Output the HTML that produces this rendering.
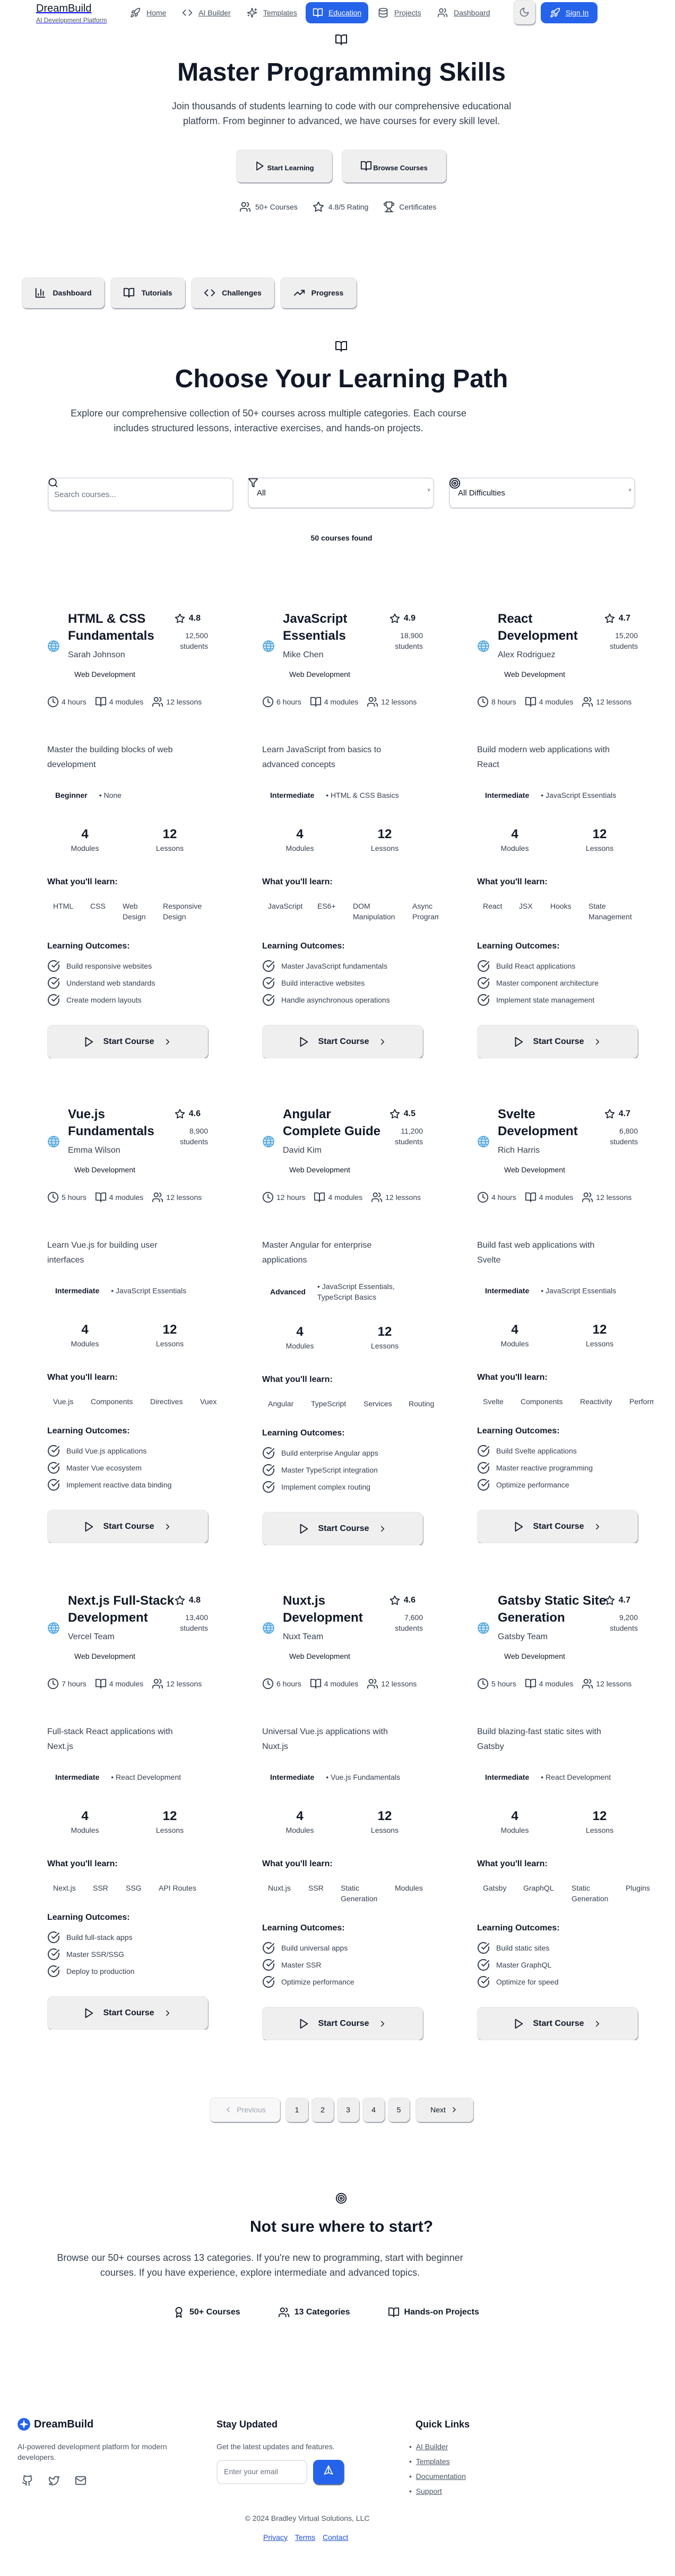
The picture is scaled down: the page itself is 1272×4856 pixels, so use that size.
<!DOCTYPE html>
<html><head><meta charset="utf-8">
<style>
*{box-sizing:border-box}
body{margin:0;width:1272px;height:4856px;position:relative;font-family:"Liberation Sans",Arial,sans-serif;color:#111827;background:#fff;overflow:hidden}
.a{position:absolute}
svg.i{fill:none;stroke:currentColor;stroke-width:2;stroke-linecap:round;stroke-linejoin:round}
.nl{position:absolute;top:14px;display:flex;align-items:center;gap:11px;font-size:14px;color:#4b5563;text-decoration:underline}
.nl svg{width:20px;height:20px}
.gbtn{position:absolute;background:#efefef;border:1px solid #e5e7eb;border-radius:9px;box-shadow:1px 2px 1px #a3a7ae;display:flex;align-items:center;justify-content:center;font-weight:bold;color:#111827}
.ctr{position:absolute;left:0;width:1287px;text-align:center}
.inp{position:absolute;border:2px solid #dfe1e6;border-radius:9px;box-shadow:0 1px 1px #c4c7cd}
.card{position:absolute;width:333px;overflow:hidden}
.hd{position:relative;padding-left:39px;width:303px}
.gl{position:absolute;left:0;top:55px;width:24px;height:24px}
.tt{font-size:24px;font-weight:bold;line-height:32px;width:205px;white-space:normal}
.au{margin-top:8px;font-size:16px;line-height:24px;color:#374151}
.bd{margin-top:10px;font-size:14px;line-height:20px;padding:4px 12px;width:max-content}
.rt{position:absolute;right:14px;top:5px;display:flex;align-items:center;gap:7px;font-size:16px;font-weight:bold;line-height:20px}
.rt svg{width:20px;height:20px}
.st{position:absolute;right:0;top:37px;text-align:right;font-size:14px;line-height:20px;color:#374151}
.meta{margin-top:27px;display:flex;gap:16px;font-size:14px;line-height:20px;color:#374151}
.meta>span{display:flex;align-items:center;gap:5px}
.meta svg{width:22px;height:22px}
.ds{margin-top:66px;font-size:16px;line-height:28px;color:#374151;width:303px;white-space:nowrap}
.df{margin-top:21px;display:flex;align-items:center;padding:4px 0;min-height:44px;font-size:14px;line-height:20px}
.lv{font-weight:bold;padding:0 12px;margin-left:3px;flex:none}
.pr{margin-left:10px;max-width:170px;color:#374151}
.sts{margin-top:36px;display:flex;gap:18px;width:302px}
.sts>div{width:142px;text-align:center}
.sts b{display:block;font-size:24px;line-height:32px}
.sts span{display:block;font-size:14px;line-height:20px;color:#374151}
.h4{margin-top:42px;font-size:16px;font-weight:bold;line-height:24px}
.sk{margin-top:23px;position:relative;height:20px;font-size:14px;line-height:20px;color:#374151;width:333px}
.sk.two{height:40px}
.sk span{position:absolute;top:0;white-space:nowrap}
.lo{margin-top:34px}
.oc{margin-top:13px;font-size:14px;line-height:24px;color:#374151}
.oc div{display:flex;gap:12px;align-items:center;margin-bottom:8px}
.oc div:last-child{margin-bottom:0}
.oc svg{width:24px;height:24px;flex:none}
.btn{margin-top:35px;width:303px;height:63px;background:#efefef;border:1px solid #e5e7eb;border-radius:10px;box-shadow:1px 2px 1px #a3a7ae;display:flex;align-items:center;justify-content:center;gap:16px;font-size:16px;font-weight:bold}
.btn svg{width:22px;height:22px}
.pg{position:absolute;top:3954px;height:46px;background:#efefef;border:1px solid #e5e7eb;border-radius:9px;box-shadow:1px 2px 1px #a3a7ae;display:flex;align-items:center;justify-content:center;font-size:14px;gap:8px}
</style></head><body>

<!-- NAV -->
<div class="a" style="left:68px;top:4px;font-size:20px;line-height:24px;text-decoration:underline;text-decoration-color:#0000ee">DreamBuild</div>
<div class="a" style="left:68px;top:31px;font-size:12px;line-height:14px;color:#4b5563;text-decoration:underline;text-decoration-color:#0000ee">AI Development Platform</div>

<div class="nl" style="left:245px"><svg class="i" viewBox="0 0 24 24"><path d="M4.5 16.5c-1.5 1.26-2 5-2 5s3.74-.5 5-2c.71-.84.7-2.13-.09-2.91a2.18 2.18 0 0 0-2.910-.09z"/><path d="m12 15-3-3a22 22 0 0 1 2-3.95A12.88 12.88 0 0 1 22 2c0 2.72-.78 7.5-6 11a22.35 22.35 0 0 1-4 2z"/><path d="M9 12H4s.55-3.03 2-4c1.62-1.08 5 0 5 0"/><path d="M12 15v5s3.03-.55 4-2c1.08-1.62 0-5 0-5"/></svg>Home</div>
<div class="nl" style="left:343px"><svg class="i" viewBox="0 0 24 24"><path d="m16 18 6-6-6-6"/><path d="m8 6-6 6 6 6"/></svg>AI Builder</div>
<div class="nl" style="left:465px"><svg class="i" viewBox="0 0 24 24"><path d="M9.937 15.5A2 2 0 0 0 8.5 14.063l-6.135-1.582a.5.5 0 0 1 0-.962L8.5 9.936A2 2 0 0 0 9.937 8.5l1.582-6.135a.5.5 0 0 1 .963 0L14.063 8.5A2 2 0 0 0 15.5 9.937l6.135 1.581a.5.5 0 0 1 0 .964L15.5 14.063a2 2 0 0 0-1.437 1.437l-1.582 6.135a.5.5 0 0 1-.963 0z"/><path d="M20 3v4M22 5h-4M4 17v2M5 18H3"/></svg>Templates</div>
<div class="a" style="left:576px;top:4px;width:118px;height:40px;background:#2563eb;border-radius:10px;display:flex;align-items:center;justify-content:center;gap:10px;color:#fff;font-size:14px;text-decoration:underline"><svg class="i" viewBox="0 0 24 24" style="width:20px;height:20px"><path d="M2 3h6a4 4 0 0 1 4 4v14a3 3 0 0 0-3-3H2z"/><path d="M22 3h-6a4 4 0 0 0-4 4v14a3 3 0 0 1 3-3h7z"/></svg>Education</div>
<div class="nl" style="left:712px"><svg class="i" viewBox="0 0 24 24"><ellipse cx="12" cy="5" rx="9" ry="3"/><path d="M3 5V19A9 3 0 0 0 21 19V5"/><path d="M3 12A9 3 0 0 0 21 12"/></svg>Projects</div>
<div class="nl" style="left:824px"><svg class="i" viewBox="0 0 24 24"><path d="M16 21v-2a4 4 0 0 0-4-4H6a4 4 0 0 0-4 4v2"/><circle cx="9" cy="7" r="4"/><path d="M22 21v-2a4 4 0 0 0-3-3.87"/><path d="M16 3.13a4 4 0 0 1 0 7.75"/></svg>Dashboard</div>
<div class="gbtn" style="left:967px;top:0;width:42px;height:46px;color:#6b7280"><svg class="i" viewBox="0 0 24 24" style="width:20px;height:20px"><path d="M12 3a6 6 0 0 0 9 9 9 9 0 1 1-9-9Z"/></svg></div>
<div class="a" style="left:1019px;top:4px;width:107px;height:40px;background:#2563eb;border-radius:10px;display:flex;align-items:center;justify-content:center;gap:10px;color:#fff;font-size:14px;text-decoration:underline"><svg class="i" viewBox="0 0 24 24" style="width:20px;height:20px"><path d="M4.5 16.5c-1.5 1.26-2 5-2 5s3.74-.5 5-2c.71-.84.7-2.13-.09-2.91a2.18 2.18 0 0 0-2.91-.09z"/><path d="m12 15-3-3a22 22 0 0 1 2-3.95A12.88 12.88 0 0 1 22 2c0 2.72-.78 7.5-6 11a22.35 22.35 0 0 1-4 2z"/><path d="M9 12H4s.55-3.03 2-4c1.62-1.08 5 0 5 0"/><path d="M12 15v5s3.03-.55 4-2c1.08-1.62 0-5 0-5"/></svg>Sign In</div>

<!-- HERO -->
<svg class="i a" viewBox="0 0 24 24" style="left:631px;top:63px;width:24px;height:24px"><path d="M2 3h6a4 4 0 0 1 4 4v14a3 3 0 0 0-3-3H2z"/><path d="M22 3h-6a4 4 0 0 0-4 4v14a3 3 0 0 1 3-3h7z"/></svg>
<div class="ctr" style="top:109px;font-size:48px;font-weight:bold;line-height:56px">Master Programming Skills</div>
<div class="ctr" style="top:186px;font-size:18px;line-height:28px;color:#374151">Join thousands of students learning to code with our comprehensive educational<br>platform. From beginner to advanced, we have courses for every skill level.</div>

<div class="gbtn" style="left:445px;top:282px;width:181px;height:62px;font-size:13px"><span style="display:flex;align-items:flex-end;gap:4px"><svg class="i" viewBox="0 0 24 24" style="width:20px;height:22px"><polygon points="6 3 20 12 6 21 6 3"/></svg><span>Start Learning</span></span></div>
<div class="gbtn" style="left:644px;top:282px;width:197px;height:62px;font-size:13px"><span style="display:flex;align-items:flex-end;gap:2px"><svg class="i" viewBox="0 0 24 24" style="width:22px;height:22px"><path d="M2 3h6a4 4 0 0 1 4 4v14a3 3 0 0 0-3-3H2z"/><path d="M22 3h-6a4 4 0 0 0-4 4v14a3 3 0 0 1 3-3h7z"/></svg><span>Browse Courses</span></span></div>

<div class="a" style="left:451px;top:378px;display:flex;align-items:center;gap:8px;font-size:14px;color:#374151;line-height:24px">
<svg class="i" viewBox="0 0 24 24" style="width:22px;height:22px"><path d="M16 21v-2a4 4 0 0 0-4-4H6a4 4 0 0 0-4 4v2"/><circle cx="9" cy="7" r="4"/><path d="M22 21v-2a4 4 0 0 0-3-3.87"/><path d="M16 3.13a4 4 0 0 1 0 7.75"/></svg><span>50+ Courses</span>
<svg class="i" viewBox="0 0 24 24" style="width:22px;height:22px;margin-left:20px"><polygon points="12 2 15.09 8.26 22 9.27 17 14.14 18.18 21.02 12 17.77 5.82 21.02 7 14.14 2 9.27 8.91 8.26 12 2"/></svg><span>4.8/5 Rating</span>
<svg class="i" viewBox="0 0 24 24" style="width:22px;height:22px;margin-left:20px"><path d="M6 9H4.5a2.5 2.5 0 0 1 0-5H6"/><path d="M18 9h1.5a2.5 2.5 0 0 0 0-5H18"/><path d="M4 22h16"/><path d="M10 14.66V17c0 .55-.47.98-.97 1.21C7.85 18.75 7 20.24 7 22"/><path d="M14 14.66V17c0 .55.47.98.97 1.21C16.15 18.75 17 20.240 17 22"/><path d="M18 2H6v7a6 6 0 0 0 12 0V2Z"/></svg><span>Certificates</span>
</div>

<!-- TABS -->
<div class="gbtn" style="left:41px;top:523px;width:156px;height:58px;font-size:14px;gap:12px"><svg class="i" viewBox="0 0 24 24" style="width:22px;height:22px"><path d="M3 3v18h18"/><path d="M18 17V9"/><path d="M13 17V5"/><path d="M8 17v-3"/></svg>Dashboard</div>
<div class="gbtn" style="left:208px;top:523px;width:141px;height:58px;font-size:14px;gap:12px"><svg class="i" viewBox="0 0 24 24" style="width:22px;height:22px"><path d="M2 3h6a4 4 0 0 1 4 4v14a3 3 0 0 0-3-3H2z"/><path d="M22 3h-6a4 4 0 0 0-4 4v14a3 3 0 0 1 3-3h7z"/></svg>Tutorials</div>
<div class="gbtn" style="left:360px;top:523px;width:157px;height:58px;font-size:14px;gap:12px"><svg class="i" viewBox="0 0 24 24" style="width:22px;height:22px"><path d="m16 18 6-6-6-6"/><path d="m8 6-6 6 6 6"/></svg>Challenges</div>
<div class="gbtn" style="left:528px;top:523px;width:144px;height:58px;font-size:14px;gap:12px"><svg class="i" viewBox="0 0 24 24" style="width:22px;height:22px"><polyline points="22 7 13.5 15.5 8.5 10.5 2 17"/><polyline points="16 7 22 7 22 13"/></svg>Progress</div>

<!-- SECTION 2 -->
<svg class="i a" viewBox="0 0 24 24" style="left:631px;top:641px;width:24px;height:24px"><path d="M2 3h6a4 4 0 0 1 4 4v14a3 3 0 0 0-3-3H2z"/><path d="M22 3h-6a4 4 0 0 0-4 4v14a3 3 0 0 1 3-3h7z"/></svg>
<div class="ctr" style="top:687px;font-size:48px;font-weight:bold;line-height:56px">Choose Your Learning Path</div>
<div class="a" style="left:82px;width:848px;top:765px;text-align:center;font-size:18px;line-height:28px;color:#374151">Explore our comprehensive collection of 50+ courses across multiple categories. Each course<br>includes structured lessons, interactive exercises, and hands-on projects.</div>

<div class="inp" style="left:90px;top:900px;width:350px;height:63px"></div>
<svg class="i a" viewBox="0 0 24 24" style="left:90px;top:900px;width:20px;height:20px"><circle cx="11" cy="11" r="8"/><path d="m21 21-4.3-4.3"/></svg>
<div class="a" style="left:102px;top:923px;font-size:15px;color:#6b7280;line-height:20px">Search courses...</div>
<div class="inp" style="left:467px;top:900px;width:351px;height:58px"></div>
<svg class="i a" viewBox="0 0 24 24" style="left:467px;top:900px;width:20px;height:20px"><polygon points="22 3 2 3 10 12.46 10 19 14 21 14 12.46 22 3"/></svg>
<div class="a" style="left:484px;top:920px;font-size:15px;line-height:20px">All</div>
<div class="a" style="left:806px;top:918px;font-size:9px;color:#374151">v</div>
<div class="inp" style="left:846px;top:900px;width:351px;height:58px"></div>
<svg class="i a" viewBox="0 0 24 24" style="left:846px;top:900px;width:22px;height:22px"><circle cx="12" cy="12" r="10"/><circle cx="12" cy="12" r="6"/><circle cx="12" cy="12" r="2"/></svg>
<div class="a" style="left:863px;top:920px;font-size:15px;line-height:20px">All Difficulties</div>
<div class="a" style="left:1185px;top:918px;font-size:9px;color:#374151">v</div>

<div class="ctr" style="top:1004px;font-size:14px;font-weight:bold;line-height:20px">50 courses found</div>

<!-- CARDS -->
<div class="card" style="left:89px;top:1151px">
<div class="hd"><svg class="gl" viewBox="0 0 24 24" fill="#cfe9f8" stroke="#4ba3dc" stroke-width="1.6"><circle cx="12" cy="12" r="10"/><path d="M12 2a14.5 14.5 0 0 0 0 20 14.5 14.5 0 0 0 0-20M2 12h20M4 7h16M4 17h16" fill="none"/></svg>
<div class="tt">HTML &amp; CSS Fundamentals</div><div class="au">Sarah Johnson</div><div class="bd">Web Development</div>
<div class="rt"><svg class="i" viewBox="0 0 24 24"><polygon points="12 2 15.09 8.26 22 9.27 17 14.14 18.18 21.02 12 17.77 5.82 21.02 7 14.14 2 9.27 8.91 8.26 12 2"/></svg>4.8</div><div class="st">12,500<br>students</div></div>
<div class="meta"><span><svg class="i" viewBox="0 0 24 24"><circle cx="12" cy="12" r="10"/><polyline points="12 6 12 12 16 14"/></svg>4 hours</span><span><svg class="i" viewBox="0 0 24 24"><path d="M2 3h6a4 4 0 0 1 4 4v14a3 3 0 0 0-3-3H2z"/><path d="M22 3h-6a4 4 0 0 0-4 4v14a3 3 0 0 1 3-3h7z"/></svg>4 modules</span><span><svg class="i" viewBox="0 0 24 24"><path d="M16 21v-2a4 4 0 0 0-4-4H6a4 4 0 0 0-4 4v2"/><circle cx="9" cy="7" r="4"/><path d="M22 21v-2a4 4 0 0 0-3-3.87"/><path d="M16 3.13a4 4 0 0 1 0 7.75"/></svg>12 lessons</span></div>
<div class="ds">Master the building blocks of web<br>development</div>
<div class="df"><span class="lv">Beginner</span><span class="pr">• None</span></div>
<div class="sts"><div><b>4</b><span>Modules</span></div><div><b>12</b><span>Lessons</span></div></div>
<div class="h4">What you'll learn:</div>
<div class="sk two"><span style="left:11px">HTML</span><span style="left:81px">CSS</span><span style="left:142px">Web<br>Design</span><span style="left:218px">Responsive<br>Design</span></div>
<div class="h4 lo">Learning Outcomes:</div>
<div class="oc"><div><svg class="i" viewBox="0 0 24 24"><path d="M21.801 10A10 10 0 1 1 17 3.335"/><path d="m9 11 3 3L22 4"/></svg>Build responsive websites</div><div><svg class="i" viewBox="0 0 24 24"><path d="M21.801 10A10 10 0 1 1 17 3.335"/><path d="m9 11 3 3L22 4"/></svg>Understand web standards</div><div><svg class="i" viewBox="0 0 24 24"><path d="M21.801 10A10 10 0 1 1 17 3.335"/><path d="m9 11 3 3L22 4"/></svg>Create modern layouts</div></div>
<div class="btn"><svg class="i" viewBox="0 0 24 24"><polygon points="6 3 20 12 6 21 6 3"/></svg>Start Course<svg class="i" viewBox="0 0 24 24" style="width:18px;height:18px"><path d="m9 18 6-6-6-6"/></svg></div>
</div>

<div class="card" style="left:494px;top:1151px">
<div class="hd"><svg class="gl" viewBox="0 0 24 24" fill="#cfe9f8" stroke="#4ba3dc" stroke-width="1.6"><circle cx="12" cy="12" r="10"/><path d="M12 2a14.5 14.5 0 0 0 0 20 14.5 14.5 0 0 0 0-20M2 12h20M4 7h16M4 17h16" fill="none"/></svg>
<div class="tt">JavaScript Essentials</div><div class="au">Mike Chen</div><div class="bd">Web Development</div>
<div class="rt"><svg class="i" viewBox="0 0 24 24"><polygon points="12 2 15.09 8.26 22 9.27 17 14.14 18.18 21.02 12 17.77 5.82 21.02 7 14.14 2 9.27 8.91 8.26 12 2"/></svg>4.9</div><div class="st">18,900<br>students</div></div>
<div class="meta"><span><svg class="i" viewBox="0 0 24 24"><circle cx="12" cy="12" r="10"/><polyline points="12 6 12 12 16 14"/></svg>6 hours</span><span><svg class="i" viewBox="0 0 24 24"><path d="M2 3h6a4 4 0 0 1 4 4v14a3 3 0 0 0-3-3H2z"/><path d="M22 3h-6a4 4 0 0 0-4 4v14a3 3 0 0 1 3-3h7z"/></svg>4 modules</span><span><svg class="i" viewBox="0 0 24 24"><path d="M16 21v-2a4 4 0 0 0-4-4H6a4 4 0 0 0-4 4v2"/><circle cx="9" cy="7" r="4"/><path d="M22 21v-2a4 4 0 0 0-3-3.87"/><path d="M16 3.13a4 4 0 0 1 0 7.75"/></svg>12 lessons</span></div>
<div class="ds">Learn JavaScript from basics to<br>advanced concepts</div>
<div class="df"><span class="lv">Intermediate</span><span class="pr">• HTML &amp; CSS Basics</span></div>
<div class="sts"><div><b>4</b><span>Modules</span></div><div><b>12</b><span>Lessons</span></div></div>
<div class="h4">What you'll learn:</div>
<div class="sk two"><span style="left:11px">JavaScript</span><span style="left:104px">ES6+</span><span style="left:171px">DOM<br>Manipulation</span><span style="left:283px">Async<br>Programming</span></div>
<div class="h4 lo">Learning Outcomes:</div>
<div class="oc"><div><svg class="i" viewBox="0 0 24 24"><path d="M21.801 10A10 10 0 1 1 17 3.335"/><path d="m9 11 3 3L22 4"/></svg>Master JavaScript fundamentals</div><div><svg class="i" viewBox="0 0 24 24"><path d="M21.801 10A10 10 0 1 1 17 3.335"/><path d="m9 11 3 3L22 4"/></svg>Build interactive websites</div><div><svg class="i" viewBox="0 0 24 24"><path d="M21.801 10A10 10 0 1 1 17 3.335"/><path d="m9 11 3 3L22 4"/></svg>Handle asynchronous operations</div></div>
<div class="btn"><svg class="i" viewBox="0 0 24 24"><polygon points="6 3 20 12 6 21 6 3"/></svg>Start Course<svg class="i" viewBox="0 0 24 24" style="width:18px;height:18px"><path d="m9 18 6-6-6-6"/></svg></div>
</div>

<div class="card" style="left:899px;top:1151px">
<div class="hd"><svg class="gl" viewBox="0 0 24 24" fill="#cfe9f8" stroke="#4ba3dc" stroke-width="1.6"><circle cx="12" cy="12" r="10"/><path d="M12 2a14.5 14.5 0 0 0 0 20 14.5 14.5 0 0 0 0-20M2 12h20M4 7h16M4 17h16" fill="none"/></svg>
<div class="tt">React Development</div><div class="au">Alex Rodriguez</div><div class="bd">Web Development</div>
<div class="rt"><svg class="i" viewBox="0 0 24 24"><polygon points="12 2 15.09 8.26 22 9.27 17 14.14 18.18 21.02 12 17.77 5.82 21.02 7 14.14 2 9.27 8.91 8.26 12 2"/></svg>4.7</div><div class="st">15,200<br>students</div></div>
<div class="meta"><span><svg class="i" viewBox="0 0 24 24"><circle cx="12" cy="12" r="10"/><polyline points="12 6 12 12 16 14"/></svg>8 hours</span><span><svg class="i" viewBox="0 0 24 24"><path d="M2 3h6a4 4 0 0 1 4 4v14a3 3 0 0 0-3-3H2z"/><path d="M22 3h-6a4 4 0 0 0-4 4v14a3 3 0 0 1 3-3h7z"/></svg>4 modules</span><span><svg class="i" viewBox="0 0 24 24"><path d="M16 21v-2a4 4 0 0 0-4-4H6a4 4 0 0 0-4 4v2"/><circle cx="9" cy="7" r="4"/><path d="M22 21v-2a4 4 0 0 0-3-3.87"/><path d="M16 3.13a4 4 0 0 1 0 7.75"/></svg>12 lessons</span></div>
<div class="ds">Build modern web applications with<br>React</div>
<div class="df"><span class="lv">Intermediate</span><span class="pr">• JavaScript Essentials</span></div>
<div class="sts"><div><b>4</b><span>Modules</span></div><div><b>12</b><span>Lessons</span></div></div>
<div class="h4">What you'll learn:</div>
<div class="sk two"><span style="left:11px">React</span><span style="left:79px">JSX</span><span style="left:138px">Hooks</span><span style="left:210px">State<br>Management</span></div>
<div class="h4 lo">Learning Outcomes:</div>
<div class="oc"><div><svg class="i" viewBox="0 0 24 24"><path d="M21.801 10A10 10 0 1 1 17 3.335"/><path d="m9 11 3 3L22 4"/></svg>Build React applications</div><div><svg class="i" viewBox="0 0 24 24"><path d="M21.801 10A10 10 0 1 1 17 3.335"/><path d="m9 11 3 3L22 4"/></svg>Master component architecture</div><div><svg class="i" viewBox="0 0 24 24"><path d="M21.801 10A10 10 0 1 1 17 3.335"/><path d="m9 11 3 3L22 4"/></svg>Implement state management</div></div>
<div class="btn"><svg class="i" viewBox="0 0 24 24"><polygon points="6 3 20 12 6 21 6 3"/></svg>Start Course<svg class="i" viewBox="0 0 24 24" style="width:18px;height:18px"><path d="m9 18 6-6-6-6"/></svg></div>
</div>

<div class="card" style="left:89px;top:2085px">
<div class="hd"><svg class="gl" viewBox="0 0 24 24" fill="#cfe9f8" stroke="#4ba3dc" stroke-width="1.6"><circle cx="12" cy="12" r="10"/><path d="M12 2a14.5 14.5 0 0 0 0 20 14.5 14.5 0 0 0 0-20M2 12h20M4 7h16M4 17h16" fill="none"/></svg>
<div class="tt">Vue.js Fundamentals</div><div class="au">Emma Wilson</div><div class="bd">Web Development</div>
<div class="rt"><svg class="i" viewBox="0 0 24 24"><polygon points="12 2 15.09 8.26 22 9.27 17 14.14 18.18 21.02 12 17.77 5.82 21.02 7 14.14 2 9.27 8.91 8.26 12 2"/></svg>4.6</div><div class="st">8,900<br>students</div></div>
<div class="meta"><span><svg class="i" viewBox="0 0 24 24"><circle cx="12" cy="12" r="10"/><polyline points="12 6 12 12 16 14"/></svg>5 hours</span><span><svg class="i" viewBox="0 0 24 24"><path d="M2 3h6a4 4 0 0 1 4 4v14a3 3 0 0 0-3-3H2z"/><path d="M22 3h-6a4 4 0 0 0-4 4v14a3 3 0 0 1 3-3h7z"/></svg>4 modules</span><span><svg class="i" viewBox="0 0 24 24"><path d="M16 21v-2a4 4 0 0 0-4-4H6a4 4 0 0 0-4 4v2"/><circle cx="9" cy="7" r="4"/><path d="M22 21v-2a4 4 0 0 0-3-3.87"/><path d="M16 3.13a4 4 0 0 1 0 7.75"/></svg>12 lessons</span></div>
<div class="ds">Learn Vue.js for building user<br>interfaces</div>
<div class="df"><span class="lv">Intermediate</span><span class="pr">• JavaScript Essentials</span></div>
<div class="sts"><div><b>4</b><span>Modules</span></div><div><b>12</b><span>Lessons</span></div></div>
<div class="h4">What you'll learn:</div>
<div class="sk"><span style="left:11px">Vue.js</span><span style="left:82px">Components</span><span style="left:194px">Directives</span><span style="left:288px">Vuex</span></div>
<div class="h4 lo">Learning Outcomes:</div>
<div class="oc"><div><svg class="i" viewBox="0 0 24 24"><path d="M21.801 10A10 10 0 1 1 17 3.335"/><path d="m9 11 3 3L22 4"/></svg>Build Vue.js applications</div><div><svg class="i" viewBox="0 0 24 24"><path d="M21.801 10A10 10 0 1 1 17 3.335"/><path d="m9 11 3 3L22 4"/></svg>Master Vue ecosystem</div><div><svg class="i" viewBox="0 0 24 24"><path d="M21.801 10A10 10 0 1 1 17 3.335"/><path d="m9 11 3 3L22 4"/></svg>Implement reactive data binding</div></div>
<div class="btn"><svg class="i" viewBox="0 0 24 24"><polygon points="6 3 20 12 6 21 6 3"/></svg>Start Course<svg class="i" viewBox="0 0 24 24" style="width:18px;height:18px"><path d="m9 18 6-6-6-6"/></svg></div>
</div>

<div class="card" style="left:494px;top:2085px">
<div class="hd"><svg class="gl" viewBox="0 0 24 24" fill="#cfe9f8" stroke="#4ba3dc" stroke-width="1.6"><circle cx="12" cy="12" r="10"/><path d="M12 2a14.5 14.5 0 0 0 0 20 14.5 14.5 0 0 0 0-20M2 12h20M4 7h16M4 17h16" fill="none"/></svg>
<div class="tt">Angular Complete Guide</div><div class="au">David Kim</div><div class="bd">Web Development</div>
<div class="rt"><svg class="i" viewBox="0 0 24 24"><polygon points="12 2 15.09 8.26 22 9.27 17 14.14 18.18 21.02 12 17.77 5.82 21.02 7 14.14 2 9.27 8.91 8.26 12 2"/></svg>4.5</div><div class="st">11,200<br>students</div></div>
<div class="meta"><span><svg class="i" viewBox="0 0 24 24"><circle cx="12" cy="12" r="10"/><polyline points="12 6 12 12 16 14"/></svg>12 hours</span><span><svg class="i" viewBox="0 0 24 24"><path d="M2 3h6a4 4 0 0 1 4 4v14a3 3 0 0 0-3-3H2z"/><path d="M22 3h-6a4 4 0 0 0-4 4v14a3 3 0 0 1 3-3h7z"/></svg>4 modules</span><span><svg class="i" viewBox="0 0 24 24"><path d="M16 21v-2a4 4 0 0 0-4-4H6a4 4 0 0 0-4 4v2"/><circle cx="9" cy="7" r="4"/><path d="M22 21v-2a4 4 0 0 0-3-3.87"/><path d="M16 3.13a4 4 0 0 1 0 7.75"/></svg>12 lessons</span></div>
<div class="ds">Master Angular for enterprise<br>applications</div>
<div class="df"><span class="lv">Advanced</span><span class="pr">• JavaScript Essentials,<br>TypeScript Basics</span></div>
<div class="sts"><div><b>4</b><span>Modules</span></div><div><b>12</b><span>Lessons</span></div></div>
<div class="h4">What you'll learn:</div>
<div class="sk"><span style="left:11px">Angular</span><span style="left:92px">TypeScript</span><span style="left:191px">Services</span><span style="left:276px">Routing</span></div>
<div class="h4 lo">Learning Outcomes:</div>
<div class="oc"><div><svg class="i" viewBox="0 0 24 24"><path d="M21.801 10A10 10 0 1 1 17 3.335"/><path d="m9 11 3 3L22 4"/></svg>Build enterprise Angular apps</div><div><svg class="i" viewBox="0 0 24 24"><path d="M21.801 10A10 10 0 1 1 17 3.335"/><path d="m9 11 3 3L22 4"/></svg>Master TypeScript integration</div><div><svg class="i" viewBox="0 0 24 24"><path d="M21.801 10A10 10 0 1 1 17 3.335"/><path d="m9 11 3 3L22 4"/></svg>Implement complex routing</div></div>
<div class="btn"><svg class="i" viewBox="0 0 24 24"><polygon points="6 3 20 12 6 21 6 3"/></svg>Start Course<svg class="i" viewBox="0 0 24 24" style="width:18px;height:18px"><path d="m9 18 6-6-6-6"/></svg></div>
</div>

<div class="card" style="left:899px;top:2085px">
<div class="hd"><svg class="gl" viewBox="0 0 24 24" fill="#cfe9f8" stroke="#4ba3dc" stroke-width="1.6"><circle cx="12" cy="12" r="10"/><path d="M12 2a14.5 14.5 0 0 0 0 20 14.5 14.5 0 0 0 0-20M2 12h20M4 7h16M4 17h16" fill="none"/></svg>
<div class="tt">Svelte Development</div><div class="au">Rich Harris</div><div class="bd">Web Development</div>
<div class="rt"><svg class="i" viewBox="0 0 24 24"><polygon points="12 2 15.09 8.26 22 9.27 17 14.14 18.18 21.02 12 17.77 5.82 21.02 7 14.14 2 9.27 8.91 8.26 12 2"/></svg>4.7</div><div class="st">6,800<br>students</div></div>
<div class="meta"><span><svg class="i" viewBox="0 0 24 24"><circle cx="12" cy="12" r="10"/><polyline points="12 6 12 12 16 14"/></svg>4 hours</span><span><svg class="i" viewBox="0 0 24 24"><path d="M2 3h6a4 4 0 0 1 4 4v14a3 3 0 0 0-3-3H2z"/><path d="M22 3h-6a4 4 0 0 0-4 4v14a3 3 0 0 1 3-3h7z"/></svg>4 modules</span><span><svg class="i" viewBox="0 0 24 24"><path d="M16 21v-2a4 4 0 0 0-4-4H6a4 4 0 0 0-4 4v2"/><circle cx="9" cy="7" r="4"/><path d="M22 21v-2a4 4 0 0 0-3-3.87"/><path d="M16 3.13a4 4 0 0 1 0 7.75"/></svg>12 lessons</span></div>
<div class="ds">Build fast web applications with<br>Svelte</div>
<div class="df"><span class="lv">Intermediate</span><span class="pr">• JavaScript Essentials</span></div>
<div class="sts"><div><b>4</b><span>Modules</span></div><div><b>12</b><span>Lessons</span></div></div>
<div class="h4">What you'll learn:</div>
<div class="sk"><span style="left:11px">Svelte</span><span style="left:82px">Components</span><span style="left:194px">Reactivity</span><span style="left:287px">Performance</span></div>
<div class="h4 lo">Learning Outcomes:</div>
<div class="oc"><div><svg class="i" viewBox="0 0 24 24"><path d="M21.801 10A10 10 0 1 1 17 3.335"/><path d="m9 11 3 3L22 4"/></svg>Build Svelte applications</div><div><svg class="i" viewBox="0 0 24 24"><path d="M21.801 10A10 10 0 1 1 17 3.335"/><path d="m9 11 3 3L22 4"/></svg>Master reactive programming</div><div><svg class="i" viewBox="0 0 24 24"><path d="M21.801 10A10 10 0 1 1 17 3.335"/><path d="m9 11 3 3L22 4"/></svg>Optimize performance</div></div>
<div class="btn"><svg class="i" viewBox="0 0 24 24"><polygon points="6 3 20 12 6 21 6 3"/></svg>Start Course<svg class="i" viewBox="0 0 24 24" style="width:18px;height:18px"><path d="m9 18 6-6-6-6"/></svg></div>
</div>

<div class="card" style="left:89px;top:3002px">
<div class="hd"><svg class="gl" viewBox="0 0 24 24" fill="#cfe9f8" stroke="#4ba3dc" stroke-width="1.6"><circle cx="12" cy="12" r="10"/><path d="M12 2a14.5 14.5 0 0 0 0 20 14.5 14.5 0 0 0 0-20M2 12h20M4 7h16M4 17h16" fill="none"/></svg>
<div class="tt">Next.js Full&#8209;Stack Development</div><div class="au">Vercel Team</div><div class="bd">Web Development</div>
<div class="rt"><svg class="i" viewBox="0 0 24 24"><polygon points="12 2 15.09 8.26 22 9.27 17 14.14 18.18 21.02 12 17.77 5.82 21.02 7 14.14 2 9.27 8.91 8.26 12 2"/></svg>4.8</div><div class="st">13,400<br>students</div></div>
<div class="meta"><span><svg class="i" viewBox="0 0 24 24"><circle cx="12" cy="12" r="10"/><polyline points="12 6 12 12 16 14"/></svg>7 hours</span><span><svg class="i" viewBox="0 0 24 24"><path d="M2 3h6a4 4 0 0 1 4 4v14a3 3 0 0 0-3-3H2z"/><path d="M22 3h-6a4 4 0 0 0-4 4v14a3 3 0 0 1 3-3h7z"/></svg>4 modules</span><span><svg class="i" viewBox="0 0 24 24"><path d="M16 21v-2a4 4 0 0 0-4-4H6a4 4 0 0 0-4 4v2"/><circle cx="9" cy="7" r="4"/><path d="M22 21v-2a4 4 0 0 0-3-3.87"/><path d="M16 3.13a4 4 0 0 1 0 7.75"/></svg>12 lessons</span></div>
<div class="ds">Full-stack React applications with<br>Next.js</div>
<div class="df"><span class="lv">Intermediate</span><span class="pr">• React Development</span></div>
<div class="sts"><div><b>4</b><span>Modules</span></div><div><b>12</b><span>Lessons</span></div></div>
<div class="h4">What you'll learn:</div>
<div class="sk"><span style="left:11px">Next.js</span><span style="left:86px">SSR</span><span style="left:148px">SSG</span><span style="left:210px">API Routes</span></div>
<div class="h4 lo">Learning Outcomes:</div>
<div class="oc"><div><svg class="i" viewBox="0 0 24 24"><path d="M21.801 10A10 10 0 1 1 17 3.335"/><path d="m9 11 3 3L22 4"/></svg>Build full-stack apps</div><div><svg class="i" viewBox="0 0 24 24"><path d="M21.801 10A10 10 0 1 1 17 3.335"/><path d="m9 11 3 3L22 4"/></svg>Master SSR/SSG</div><div><svg class="i" viewBox="0 0 24 24"><path d="M21.801 10A10 10 0 1 1 17 3.335"/><path d="m9 11 3 3L22 4"/></svg>Deploy to production</div></div>
<div class="btn"><svg class="i" viewBox="0 0 24 24"><polygon points="6 3 20 12 6 21 6 3"/></svg>Start Course<svg class="i" viewBox="0 0 24 24" style="width:18px;height:18px"><path d="m9 18 6-6-6-6"/></svg></div>
</div>

<div class="card" style="left:494px;top:3002px">
<div class="hd"><svg class="gl" viewBox="0 0 24 24" fill="#cfe9f8" stroke="#4ba3dc" stroke-width="1.6"><circle cx="12" cy="12" r="10"/><path d="M12 2a14.5 14.5 0 0 0 0 20 14.5 14.5 0 0 0 0-20M2 12h20M4 7h16M4 17h16" fill="none"/></svg>
<div class="tt">Nuxt.js Development</div><div class="au">Nuxt Team</div><div class="bd">Web Development</div>
<div class="rt"><svg class="i" viewBox="0 0 24 24"><polygon points="12 2 15.09 8.26 22 9.27 17 14.14 18.18 21.02 12 17.77 5.82 21.02 7 14.14 2 9.27 8.91 8.26 12 2"/></svg>4.6</div><div class="st">7,600<br>students</div></div>
<div class="meta"><span><svg class="i" viewBox="0 0 24 24"><circle cx="12" cy="12" r="10"/><polyline points="12 6 12 12 16 14"/></svg>6 hours</span><span><svg class="i" viewBox="0 0 24 24"><path d="M2 3h6a4 4 0 0 1 4 4v14a3 3 0 0 0-3-3H2z"/><path d="M22 3h-6a4 4 0 0 0-4 4v14a3 3 0 0 1 3-3h7z"/></svg>4 modules</span><span><svg class="i" viewBox="0 0 24 24"><path d="M16 21v-2a4 4 0 0 0-4-4H6a4 4 0 0 0-4 4v2"/><circle cx="9" cy="7" r="4"/><path d="M22 21v-2a4 4 0 0 0-3-3.87"/><path d="M16 3.13a4 4 0 0 1 0 7.75"/></svg>12 lessons</span></div>
<div class="ds">Universal Vue.js applications with<br>Nuxt.js</div>
<div class="df"><span class="lv">Intermediate</span><span class="pr">• Vue.js Fundamentals</span></div>
<div class="sts"><div><b>4</b><span>Modules</span></div><div><b>12</b><span>Lessons</span></div></div>
<div class="h4">What you'll learn:</div>
<div class="sk two"><span style="left:11px">Nuxt.js</span><span style="left:87px">SSR</span><span style="left:148px">Static<br>Generation</span><span style="left:250px">Modules</span></div>
<div class="h4 lo">Learning Outcomes:</div>
<div class="oc"><div><svg class="i" viewBox="0 0 24 24"><path d="M21.801 10A10 10 0 1 1 17 3.335"/><path d="m9 11 3 3L22 4"/></svg>Build universal apps</div><div><svg class="i" viewBox="0 0 24 24"><path d="M21.801 10A10 10 0 1 1 17 3.335"/><path d="m9 11 3 3L22 4"/></svg>Master SSR</div><div><svg class="i" viewBox="0 0 24 24"><path d="M21.801 10A10 10 0 1 1 17 3.335"/><path d="m9 11 3 3L22 4"/></svg>Optimize performance</div></div>
<div class="btn"><svg class="i" viewBox="0 0 24 24"><polygon points="6 3 20 12 6 21 6 3"/></svg>Start Course<svg class="i" viewBox="0 0 24 24" style="width:18px;height:18px"><path d="m9 18 6-6-6-6"/></svg></div>
</div>

<div class="card" style="left:899px;top:3002px">
<div class="hd"><svg class="gl" viewBox="0 0 24 24" fill="#cfe9f8" stroke="#4ba3dc" stroke-width="1.6"><circle cx="12" cy="12" r="10"/><path d="M12 2a14.5 14.5 0 0 0 0 20 14.5 14.5 0 0 0 0-20M2 12h20M4 7h16M4 17h16" fill="none"/></svg>
<div class="tt" style="width:206px">Gatsby Static Site Generation</div><div class="au">Gatsby Team</div><div class="bd">Web Development</div>
<div class="rt"><svg class="i" viewBox="0 0 24 24"><polygon points="12 2 15.09 8.26 22 9.27 17 14.14 18.18 21.02 12 17.77 5.82 21.02 7 14.14 2 9.27 8.91 8.26 12 2"/></svg>4.7</div><div class="st">9,200<br>students</div></div>
<div class="meta"><span><svg class="i" viewBox="0 0 24 24"><circle cx="12" cy="12" r="10"/><polyline points="12 6 12 12 16 14"/></svg>5 hours</span><span><svg class="i" viewBox="0 0 24 24"><path d="M2 3h6a4 4 0 0 1 4 4v14a3 3 0 0 0-3-3H2z"/><path d="M22 3h-6a4 4 0 0 0-4 4v14a3 3 0 0 1 3-3h7z"/></svg>4 modules</span><span><svg class="i" viewBox="0 0 24 24"><path d="M16 21v-2a4 4 0 0 0-4-4H6a4 4 0 0 0-4 4v2"/><circle cx="9" cy="7" r="4"/><path d="M22 21v-2a4 4 0 0 0-3-3.87"/><path d="M16 3.13a4 4 0 0 1 0 7.75"/></svg>12 lessons</span></div>
<div class="ds">Build blazing-fast static sites with<br>Gatsby</div>
<div class="df"><span class="lv">Intermediate</span><span class="pr">• React Development</span></div>
<div class="sts"><div><b>4</b><span>Modules</span></div><div><b>12</b><span>Lessons</span></div></div>
<div class="h4">What you'll learn:</div>
<div class="sk two"><span style="left:11px">Gatsby</span><span style="left:87px">GraphQL</span><span style="left:178px">Static<br>Generation</span><span style="left:280px">Plugins</span></div>
<div class="h4 lo">Learning Outcomes:</div>
<div class="oc"><div><svg class="i" viewBox="0 0 24 24"><path d="M21.801 10A10 10 0 1 1 17 3.335"/><path d="m9 11 3 3L22 4"/></svg>Build static sites</div><div><svg class="i" viewBox="0 0 24 24"><path d="M21.801 10A10 10 0 1 1 17 3.335"/><path d="m9 11 3 3L22 4"/></svg>Master GraphQL</div><div><svg class="i" viewBox="0 0 24 24"><path d="M21.801 10A10 10 0 1 1 17 3.335"/><path d="m9 11 3 3L22 4"/></svg>Optimize for speed</div></div>
<div class="btn"><svg class="i" viewBox="0 0 24 24"><polygon points="6 3 20 12 6 21 6 3"/></svg>Start Course<svg class="i" viewBox="0 0 24 24" style="width:18px;height:18px"><path d="m9 18 6-6-6-6"/></svg></div>
</div>

<!-- PAGINATION -->
<div class="pg" style="left:395px;width:133px;background:#f8f8f8;color:#9ca3af"><svg class="i" viewBox="0 0 24 24" style="width:16px;height:16px"><path d="m15 18-6-6 6-6"/></svg>Previous</div>
<div class="pg" style="left:538px;width:43px">1</div>
<div class="pg" style="left:587px;width:42px">2</div>
<div class="pg" style="left:635px;width:42px">3</div>
<div class="pg" style="left:683px;width:42px">4</div>
<div class="pg" style="left:731px;width:41px">5</div>
<div class="pg" style="left:783px;width:109px">Next<svg class="i" viewBox="0 0 24 24" style="width:16px;height:16px"><path d="m9 18 6-6-6-6"/></svg></div>

<!-- CTA -->
<svg class="i a" viewBox="0 0 24 24" style="left:632px;top:4133px;width:22px;height:22px"><circle cx="12" cy="12" r="10"/><circle cx="12" cy="12" r="6"/><circle cx="12" cy="12" r="2"/></svg>
<div class="ctr" style="top:4180px;font-size:30px;font-weight:bold;line-height:36px">Not sure where to start?</div>
<div class="a" style="left:90px;width:800px;top:4242px;text-align:center;font-size:18px;line-height:28px;color:#374151">Browse our 50+ courses across 13 categories. If you're new to programming, start with beginner<br>courses. If you have experience, explore intermediate and advanced topics.</div>
<div class="a" style="left:326px;top:4347px;display:flex;align-items:center;gap:9px;font-size:16px;font-weight:bold;line-height:24px">
<svg class="i" viewBox="0 0 24 24" style="width:22px;height:22px"><circle cx="12" cy="8" r="6"/><path d="M15.477 12.89 17 22l-5-3-5 3 1.523-9.11"/></svg><span>50+ Courses</span>
<svg class="i" viewBox="0 0 24 24" style="width:22px;height:22px;margin-left:62px"><path d="M16 21v-2a4 4 0 0 0-4-4H6a4 4 0 0 0-4 4v2"/><circle cx="9" cy="7" r="4"/><path d="M22 21v-2a4 4 0 0 0-3-3.87"/><path d="M16 3.13a4 4 0 0 1 0 7.75"/></svg><span>13 Categories</span>
<svg class="i" viewBox="0 0 24 24" style="width:22px;height:22px;margin-left:62px"><path d="M2 3h6a4 4 0 0 1 4 4v14a3 3 0 0 0-3-3H2z"/><path d="M22 3h-6a4 4 0 0 0-4 4v14a3 3 0 0 1 3-3h7z"/></svg><span>Hands-on Projects</span>
</div>

<!-- FOOTER -->
<svg class="a" viewBox="0 0 24 24" style="left:32px;top:4557px;width:26px;height:26px"><circle cx="12" cy="12" r="11" fill="#2563eb"/><path d="M12 4l2 6 6 2-6 2-2 6-2-6-6-2 6-2z" fill="#fff"/></svg>
<div class="a" style="left:64px;top:4558px;font-size:20px;font-weight:bold;line-height:24px">DreamBuild</div>
<div class="a" style="left:33px;top:4602px;width:290px;font-size:14px;line-height:20px;color:#4b5563">AI-powered development platform for modern developers.</div>
<div class="a" style="left:41px;top:4665px;display:flex;gap:28px;color:#4b5563">
<svg class="i" viewBox="0 0 24 24" style="width:22px;height:22px"><path d="M15 22v-4a4.8 4.8 0 0 0-1-3.5c3 0 6-2 6-5.5.08-1.25-.27-2.48-1-3.5.28-1.15.28-2.35 0-3.5 0 0-1 0-3 1.5-2.64-.5-5.36-.5-8 0C6 2 5 2 5 2c-.3 1.15-.3 2.35 0 3.5A5.4 5.4 0 0 0 4 9c0 3.5 3 5.5 6 5.5-.39.49-.68 1.05-.85 1.65-.17.6-.22 1.23-.15 1.85v4"/><path d="M9 18c-4.51 2-5-2-7-2"/></svg>
<svg class="i" viewBox="0 0 24 24" style="width:22px;height:22px"><path d="M22 4s-.7 2.1-2 3.4c1.6 10-9.4 17.3-18 11.6 2.2.1 4.4-.6 6-2C3 15.5.5 9.6 3 5c2.2 2.6 5.6 4.1 9 4-.9-4.2 4-6.6 7-3.8 1.1 0 3-1.2 3-1.2z"/></svg>
<svg class="i" viewBox="0 0 24 24" style="width:22px;height:22px"><rect width="20" height="16" x="2" y="4" rx="2"/><path d="m22 7-8.97 5.7a1.94 1.94 0 0 1-2.06 0L2 7"/></svg>
</div>
<div class="a" style="left:408px;top:4559px;font-size:18px;font-weight:bold;line-height:22px">Stay Updated</div>
<div class="a" style="left:408px;top:4602px;font-size:14px;line-height:20px;color:#4b5563">Get the latest updates and features.</div>
<div class="a" style="left:408px;top:4637px;width:171px;height:46px;border:2px solid #e5e7eb;border-radius:10px;font-size:14px;color:#6b7280;padding:12px 0 0 12px">Enter your email</div>
<div class="a" style="left:590px;top:4637px;width:58px;height:46px;background:#2563eb;border-radius:10px;box-shadow:1px 2px 1px #6b7280;display:flex;align-items:center;justify-content:center;color:#fff"><svg class="i" viewBox="0 0 24 24" style="width:20px;height:20px;transform:rotate(-45deg)"><path d="m22 2-7 20-4-9-9-4Z"/><path d="M22 2 11 13"/></svg></div>
<div class="a" style="left:783px;top:4559px;font-size:18px;font-weight:bold;line-height:22px">Quick Links</div>
<div class="a" style="left:771px;top:4602px;font-size:14px;line-height:20px;color:#4b5563">
<div style="margin-bottom:8px">•&nbsp;&nbsp;<u>AI Builder</u></div>
<div style="margin-bottom:8px">•&nbsp;&nbsp;<u>Templates</u></div>
<div style="margin-bottom:8px">•&nbsp;&nbsp;<u>Documentation</u></div>
<div>•&nbsp;&nbsp;<u>Support</u></div>
</div>
<div class="a" style="left:379px;width:400px;top:4737px;text-align:center;font-size:14px;line-height:20px;color:#4b5563">© 2024 Bradley Virtual Solutions, LLC</div>
<div class="a" style="left:496px;top:4773px;display:flex;gap:14px;font-size:14px;line-height:20px;color:#1d4ed8"><span style="text-decoration:underline">Privacy</span><span style="text-decoration:underline">Terms</span><span style="text-decoration:underline">Contact</span></div>

</body></html>
